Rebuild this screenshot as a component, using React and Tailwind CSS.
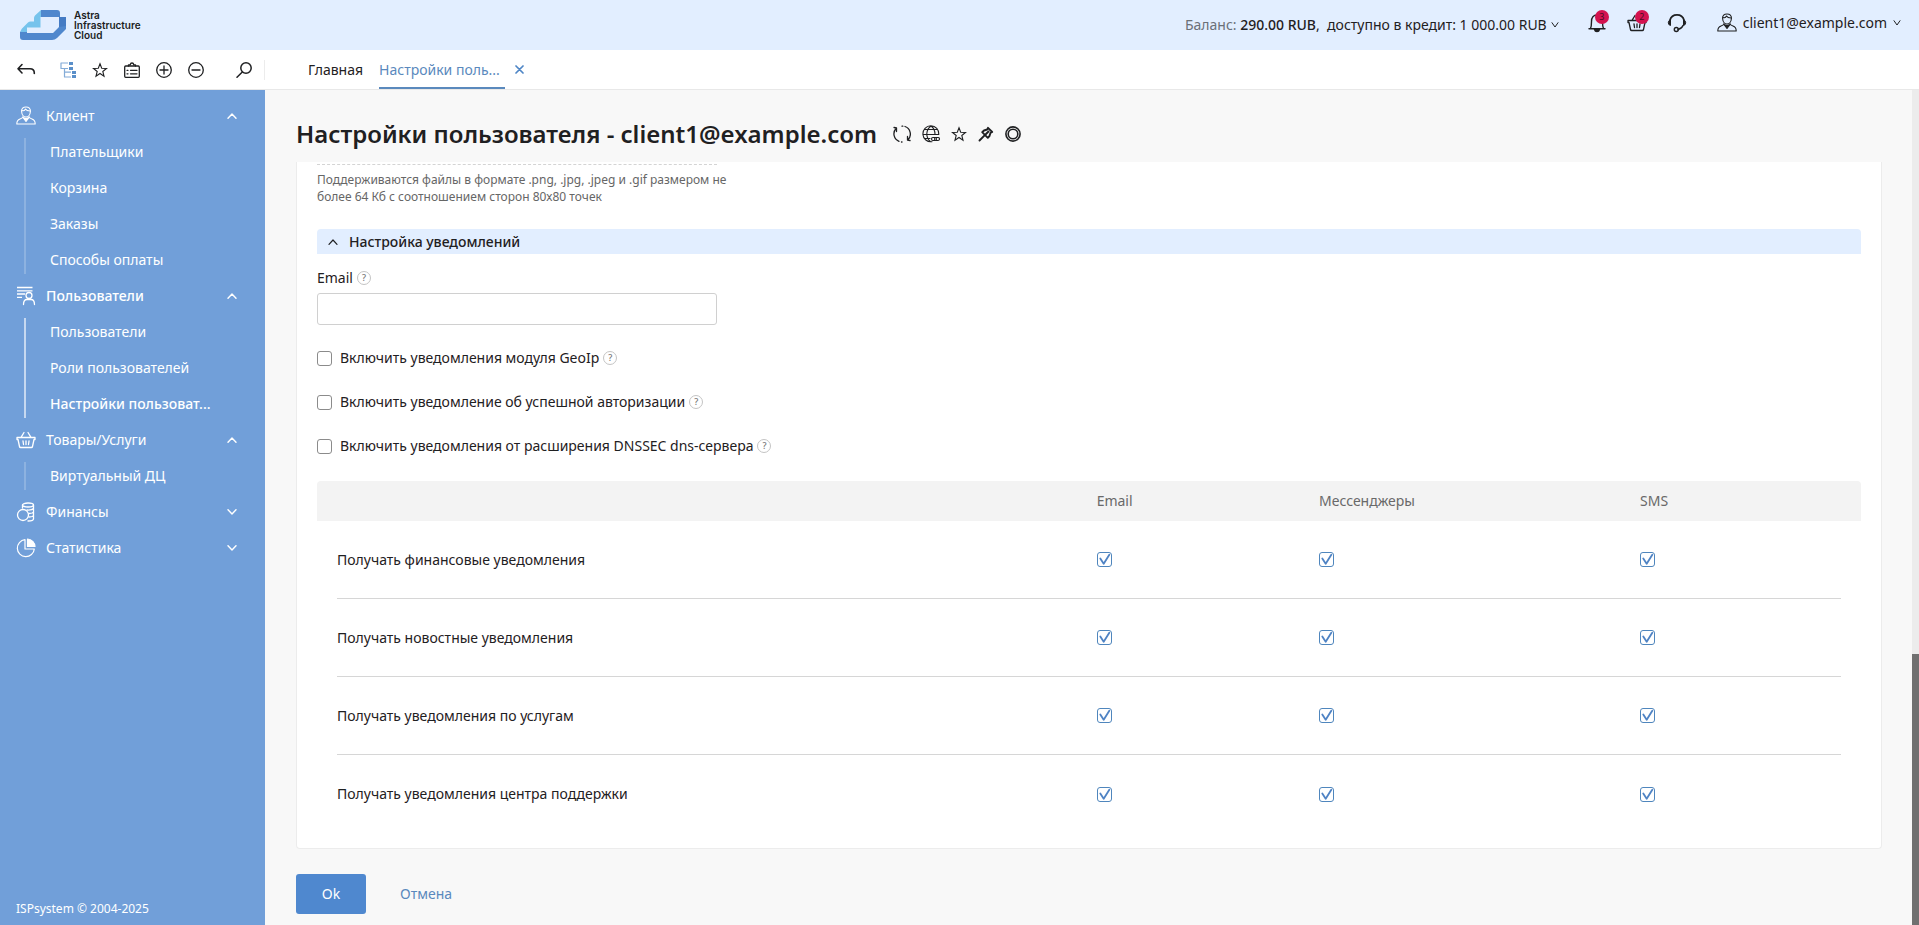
import React from 'react';

const Svg = ({ w = 20, h = w, sw = 1.3, className = '', children }) => (
  <svg width={w} height={h} viewBox={`0 0 ${w} ${h}`} fill="none" stroke="currentColor" strokeWidth={sw}
    strokeLinecap="round" strokeLinejoin="round" className={`shrink-0 ${className}`} aria-hidden="true">
    {children}
  </svg>
);

const Logo = () => (
  <svg width="46" height="30" viewBox="0 0 46 30" aria-hidden="true" className="shrink-0">
    <path d="M21 0H37Q40 0 40 3V7H46V19L37 28Q35 30 32 30H3Q0 30 0 27V22L7 17V23H33L39 17V7H21Z" fill="#4f87cd" />
    <path d="M39 7H46V16L39 17Z" fill="#447bc4" />
    <path d="M21 0V7H20.500V17.500H7V22H0.500Q0.500 20 2 18.500L8 12.500Q9 11.500 10.500 11.500H14V8Q14 6.500 15 5.500Z" fill="#76c3ec" />
  </svg>
);

const Chevron = ({ up, w = 10, sw = 1.4 }) => (
  <Svg w={w} h={6} sw={sw}>
    <path d={up ? `M1 5.300 ${w / 2} 1 ${w - 1} 5.300` : `M1 0.700 ${w / 2} 5 ${w - 1} 0.700`} />
  </Svg>
);

const UserIcon = () => (
  <Svg sw={1.1}>
    <path d="M5.600 5.500C5.300 2.700 7.200 1 10 1s4.700 1.700 4.400 4.500C14.200 8.500 12.300 11 10 11S5.800 8.500 5.600 5.500Z" />
    <path d="M6 4.500C7.500 5 9 4.300 9.500 3c1 1.800 2.600 2 4.600 2" />
    <path d="M7 10.500c-.3 1.600-1.300 2-3 2.600C1.800 13.900.8 15.500.8 18h18.400c0-2.500-1-4.100-3.200-4.900-1.700-.6-2.700-1-3-2.600" />
    <path d="M7 11.500 10 15.500 13 11.500 10 12.500Z" fill="currentColor" />
  </Svg>
);
const UsersIcon = () => (
  <Svg sw={1.3}>
    <path d="M1 1.500H16.500M1 4.800H16.500M1 8H9M1 11.300H6" strokeLinecap="butt" />
    <circle cx="13" cy="9.500" r="3" />
    <path d="M7.500 18.500C7.500 15 9 13.500 11 13.500h4c2 0 3.500 1.500 3.500 5" />
  </Svg>
);
const BasketIcon = () => (
  <Svg sw={1.3}>
    <path d="M1 7.500H19V9.500H18L16.500 16.500Q16.300 17.500 15.300 17.500H4.700Q3.700 17.500 3.500 16.500L2 9.500H1ZM5 7.300 8 2.500M15 7.300 12 2.500M7 10.800 7.500 14.500M10 10.800V14.500M13 10.800 12.500 14.500" />
  </Svg>
);
const CoinsIcon = () => (
  <Svg sw={1.3}>
    <ellipse cx="12" cy="3" rx="5.500" ry="2" />
    <path d="M6.500 3V6M17.500 3V17Q17.500 18.800 12 19M17.500 6.500Q16 8.300 11 8M17.500 10Q16.500 11.500 13 11.500M17.500 13.500Q16.500 15 13 15" />
    <circle cx="7" cy="13" r="5.500" />
  </Svg>
);
const PieIcon = () => (
  <Svg sw={1.2}>
    <path d="M9 1.700A8.500 8.500 0 1 0 18.300 11H9Z" />
    <path d="M11.500 1A8 8 0 0 1 19 8.500H11.500Z" fill="currentColor" />
  </Svg>
);
const Star = () => (
  <Svg w={16} sw={1.1}>
    <path d="M8 1.800 9.700 6.300 14.500 6.500 10.800 9.500 12 14.200 8 11.500 4 14.200 5.200 9.500 1.500 6.500 6.300 6.300Z" strokeLinejoin="miter" />
  </Svg>
);

const menu = [
  { title: 'Клиент', icon: <UserIcon />, items: ['Плательщики', 'Корзина', 'Заказы', 'Способы оплаты'] },
  { title: 'Пользователи', icon: <UsersIcon />, active: true, items: ['Пользователи', 'Роли пользователей', 'Настройки пользоват...'] },
  { title: 'Товары/Услуги', icon: <BasketIcon />, items: ['Виртуальный ДЦ'] },
  { title: 'Финансы', icon: <CoinsIcon />, items: [] },
  { title: 'Статистика', icon: <PieIcon />, items: [] },
];

const Badge = ({ children }) => (
  <span className="absolute -top-[3px] left-2 flex size-3.5 items-center justify-center rounded-full bg-[#d3134f] text-[9px] leading-3 text-[#4b0b22]">{children}</span>
);

const Header = () => (
  <header className="flex h-[50px] shrink-0 items-center justify-between bg-[#e2eeff] pl-5 pr-[18px]">
    <a href="#home" className="flex items-center gap-2 font-['Inter',sans-serif] text-[10px] font-semibold leading-[10px] text-[#1b1d22]">
      <Logo />
      <span>Astra<br />Infrastructure<br />Cloud</span>
    </a>
    <div className="flex items-center">
      <button className="flex items-center gap-1 whitespace-pre">
        <span><span className="text-[#6b7078]">Баланс: </span><span className="font-medium">290.00 RUB</span>,  доступно в кредит: 1 000.00 RUB</span>
        <Chevron w={8} sw={1} />
      </button>
      <div className="ml-7 flex items-center gap-5 pb-1">
        <button className="relative" aria-label="Уведомления">
          <Svg sw={1.4}>
            <path d="M2 15.800H18M3.500 15.500Q4.500 13.500 4.500 8.500C4.500 4.500 6.500 2 10 2s5.500 2.500 5.500 6.500q0 5 1 7" />
            <path d="M7.500 16.500H12.500Q12 18.500 10 18.500T7.500 16.500Z" fill="currentColor" />
          </Svg>
          <Badge>3</Badge>
        </button>
        <button className="relative" aria-label="Корзина">
          <BasketIcon />
          <Badge>2</Badge>
        </button>
        <button aria-label="Поддержка">
          <Svg sw={1.8}>
            <path d="M3 7C4 3.500 6.500 1.800 10 1.800S16 3.500 17 7" />
            <path d="M3.500 7V12.500Q1.300 12 1.300 9.700T3.500 7ZM16.500 7V12.500Q18.700 12 18.700 9.700T16.500 7Z" fill="currentColor" strokeWidth="1" />
            <path d="M16 12.500Q15 15.500 11 16.500" strokeWidth="1.400" />
            <circle cx="9.300" cy="16.500" r="2" strokeWidth="1.400" />
          </Svg>
        </button>
      </div>
      <button className="ml-[30px] flex items-center gap-1.5 pb-1">
        <UserIcon />
        <span className="flex items-center gap-1.5">client1@example.com<Chevron w={8} sw={1} /></span>
      </button>
    </div>
  </header>
);

const Toolbar = () => (
  <div className="flex h-10 shrink-0 border-b border-[#e8e8e8] bg-white">
    <div className="flex w-[265px] shrink-0 items-center pl-4">
      <button aria-label="Назад"><Svg sw={1.6}><path d="M6 4.500 2 8.700 6 13M2.500 8.700H14Q18.300 8.700 18.300 13V13.500" /></Svg></button>
      <div className="ml-6 flex items-center gap-4">
        <button aria-label="Дерево" className="text-[#5a8fc9]">
          <Svg w={16} sw={1.2}>
            <path d="M8 1H1V6.500H8M4.500 6.500V15H11M4.500 10.200H11" strokeOpacity=".75" strokeLinecap="butt" />
            <path d="M9 1.500H13M9 6.500H13M12 10.500H16M12 14.500H16" strokeWidth="3" strokeLinecap="butt" />
          </Svg>
        </button>
        <button aria-label="Избранное"><Star /></button>
        <button aria-label="Карточка">
          <Svg w={16} sw={1.3}>
            <rect x="0.700" y="4" width="14.600" height="11.300" rx="1" />
            <path d="M4.500 4V2.800H6.200Q6.500 1 8 1T9.800 2.800H11.500V4M6.500 8.300H13M6.500 11.800H13M3 8.300H4M3 11.800H4" />
          </Svg>
        </button>
        <button aria-label="Развернуть"><Svg w={16} sw={1.3}><circle cx="8" cy="8" r="7.300" /><path d="M8 4V12M4 8H12" /></Svg></button>
        <button aria-label="Свернуть"><Svg w={16} sw={1.3}><circle cx="8" cy="8" r="7.300" /><path d="M4 8H12" /></Svg></button>
      </div>
      <button aria-label="Поиск" className="ml-8"><Svg w={16} sw={1.5}><circle cx="10" cy="6" r="5.200" /><path d="M6.300 10 1 15.200" /></Svg></button>
      <span className="ml-auto h-5 w-px bg-[#ececec]" />
    </div>
    <nav className="flex pl-[43px]">
      <a href="#main" className="flex items-center">Главная</a>
      <a href="#settings" className="ml-4 flex w-[126px] items-center border-b-2 border-[#5a89bd] pt-0.5 text-[#5a89bd]">
        Настройки поль...
      </a>
      <button aria-label="Закрыть вкладку" className="ml-2.5 text-[#4f86c6]"><Svg w={9} sw={1.7}><path d="M1 1 8 8M8 1 1 8" /></Svg></button>
    </nav>
  </div>
);

const Sidebar = () => (
  <aside className="flex w-[265px] shrink-0 flex-col bg-[#719fd9] pt-2 text-white">
    <nav className="flex-1">
      {menu.map((g) => (
        <section key={g.title}>
          <button className={`flex h-9 w-full items-center pl-4 pr-7 ${g.active ? 'font-medium' : ''}`}>
            {g.icon}
            <span className="ml-2.5 flex-1 text-left">{g.title}</span>
            <Chevron up={g.items.length > 0} />
          </button>
          {g.items.length > 0 && (
            <div className="flex">
              <span className={`my-1 ml-6 w-0.5 ${g.active ? 'bg-white/60' : 'bg-white/20'}`} />
              <ul className="ml-6">
                {g.items.map((t) => (
                  <li key={t} className="flex h-9 items-center">
                    <a href="#section" className={t.startsWith('Настройки') ? 'font-medium' : ''}>{t}</a>
                  </li>
                ))}
              </ul>
            </div>
          )}
        </section>
      ))}
    </nav>
    <footer className="px-4 pb-2 text-xs leading-4">ISPsystem © 2004-2025</footer>
  </aside>
);

const Help = () => (
  <button aria-label="Справка" className="flex size-3.5 items-center justify-center rounded-full border border-[#c4c4c4] text-[9px] font-medium leading-3 text-[#777]">?</button>
);

const Toggle = ({ id, label }) => (
  <div className="flex h-11 items-center gap-1">
    <input id={id} type="checkbox" className="size-[15px] appearance-none rounded-[3px] border border-[#8b8b8b] bg-white" />
    <label htmlFor={id} className="ml-1">{label}</label>
    <Help />
  </div>
);

const Checked = ({ label }) => (
  <span className="relative block size-[15px]">
    <input type="checkbox" defaultChecked aria-label={label} className="block size-[15px] appearance-none rounded-[3px] border border-[#4f86bd] bg-white" />
    <span className="pointer-events-none absolute inset-0 text-[#4f83c4]">
      <Svg w={15} sw={1.8}><path d="M3.300 6.500 6.700 11.800 12.300 2.800" /></Svg>
    </span>
  </span>
);

const rows = ['Получать финансовые уведомления', 'Получать новостные уведомления', 'Получать уведомления по услугам', 'Получать уведомления центра поддержки'];
const channels = ['Email', 'Мессенджеры', 'SMS'];

const Notifications = () => (
  <table className="w-full table-fixed border-separate border-spacing-0 text-left">
    <thead className="text-[#696969]">
      <tr className="h-10">
        <td className="w-5 rounded-tl bg-[#f3f3f3]" />
        <td className="w-[49.2%] bg-[#f3f3f3]" />
        <th className="w-[14.4%] bg-[#f3f3f3] font-normal">Email</th>
        <th className="w-[20.8%] bg-[#f3f3f3] font-normal">Мессенджеры</th>
        <th className="bg-[#f3f3f3] font-normal">SMS</th>
        <td className="w-5 rounded-tr bg-[#f3f3f3]" />
      </tr>
    </thead>
    <tbody>
      {rows.map((r, i) => {
        const line = i < rows.length - 1 ? 'border-b border-[#d6d6d6]' : '';
        return (
          <tr key={r} className="h-[78px]">
            <td />
            <th className={`font-normal ${line}`}>{r}</th>
            {channels.map((c) => <td key={c} className={line}><Checked label={`${r}: ${c}`} /></td>)}
            <td />
          </tr>
        );
      })}
    </tbody>
  </table>
);

const TitleIcons = () => (
  <div className="flex items-center gap-[11px]">
    <button aria-label="Обновить">
      <Svg w={18} sw={1.3}><path d="M6 16.300A8 8 0 0 1 3 3.500M1 2.500 3.500 3V6.500M12 1.500A8 8 0 0 1 15 14.700M17 15.500 14.500 15V11.500M9 1.200 9.800 1.100M8.500 17H9" /></Svg>
    </button>
    <button aria-label="Язык">
      <Svg w={18} sw={1.1}>
        <path d="M10 16.700A8 8 0 1 1 16.800 9.500M9 1C3.500 5 3.500 12.500 8.500 16.700M9 1C12 3 13 6 13 9.500M2.500 4.500H15.500M1 9.500H16M2.500 13.500H8" />
        <rect x="9.500" y="12.500" width="5" height="3" rx="1.500" /><rect x="12.500" y="12.500" width="5" height="3" rx="1.500" />
      </Svg>
    </button>
    <button aria-label="В избранное"><Star /></button>
    <button aria-label="Закрепить">
      <Svg w={16} sw={1.9}><path d="M10 1.800 14.200 6 12.500 6.800 11.500 10 9.800 11.800 4.200 6.200 6 4.500 9.200 3.500ZM6.800 9.200 1.500 14.500M8 8 10.500 5.500" /></Svg>
    </button>
    <button aria-label="Помощь"><Svg w={16} sw={1.6}><circle cx="8" cy="8" r="7.100" /><circle cx="8" cy="8" r="4.800" /></Svg></button>
  </div>
);

const Main = () => (
  <main className="flex min-w-0 flex-1 flex-col bg-[#f8f8f8] pl-[31px] pr-[30px]">
    <div className="flex h-[72px] shrink-0 items-center gap-4 pt-4">
      <h1 className="text-2xl font-semibold leading-8">Настройки пользователя - client1@example.com</h1>
      <TitleIcons />
    </div>
    <form className="flex flex-1 flex-col" onSubmit={(e) => e.preventDefault()}>
      <div className="rounded-b border border-t-0 border-[#ececec] bg-white px-5 pb-[15px] pt-[2px]">
        <div className="w-[400px] border-t border-dashed border-[#d4d4d4]" />
        <p className="w-[420px] pt-1.5 text-xs leading-[17px] text-[#666]">
          Поддерживаются файлы в формате .png, .jpg, .jpeg и .gif размером не более 64 Кб с соотношением сторон 80х80 точек
        </p>
        <button className="mt-6 flex h-[25px] w-full items-center gap-[11px] rounded-t-sm bg-[#e2eeff] pl-[11px] font-medium">
          <Chevron up sw={1.2} />
          Настройка уведомлений
        </button>
        <div className="mt-3.5 flex items-center gap-1 leading-5">
          <label htmlFor="email">Email</label>
          <Help />
        </div>
        <input id="email" type="email" className="mt-[5px] block h-8 w-[400px] rounded-[3px] border border-[#d0d0d0] bg-white px-2" />
        <div className="mb-[13px] mt-[11px]">
          <Toggle id="geoip" label="Включить уведомления модуля GeoIp" />
          <Toggle id="auth" label="Включить уведомление об успешной авторизации" />
          <Toggle id="dnssec" label="Включить уведомления от расширения DNSSEC dns-сервера" />
        </div>
        <Notifications />
      </div>
      <div className="mt-[25px] flex items-center gap-[34px]">
        <button type="submit" className="h-10 w-[70px] rounded-[3px] bg-[#4f88cf] text-white">Ok</button>
        <button type="button" className="text-[#5a89bd]">Отмена</button>
      </div>
    </form>
  </main>
);

export default function App() {
  return (
    <div className="flex min-h-screen flex-col font-['Noto_Sans','Open_Sans',sans-serif] text-sm text-[#1f2022]">
      <Header />
      <Toolbar />
      <div className="flex flex-1">
        <Sidebar />
        <Main />
        <div className="flex w-[7px] shrink-0 flex-col justify-end bg-[#ececec]" aria-hidden="true">
          <div className="h-[32.400%] bg-[#707070]" />
        </div>
      </div>
    </div>
  );
}
